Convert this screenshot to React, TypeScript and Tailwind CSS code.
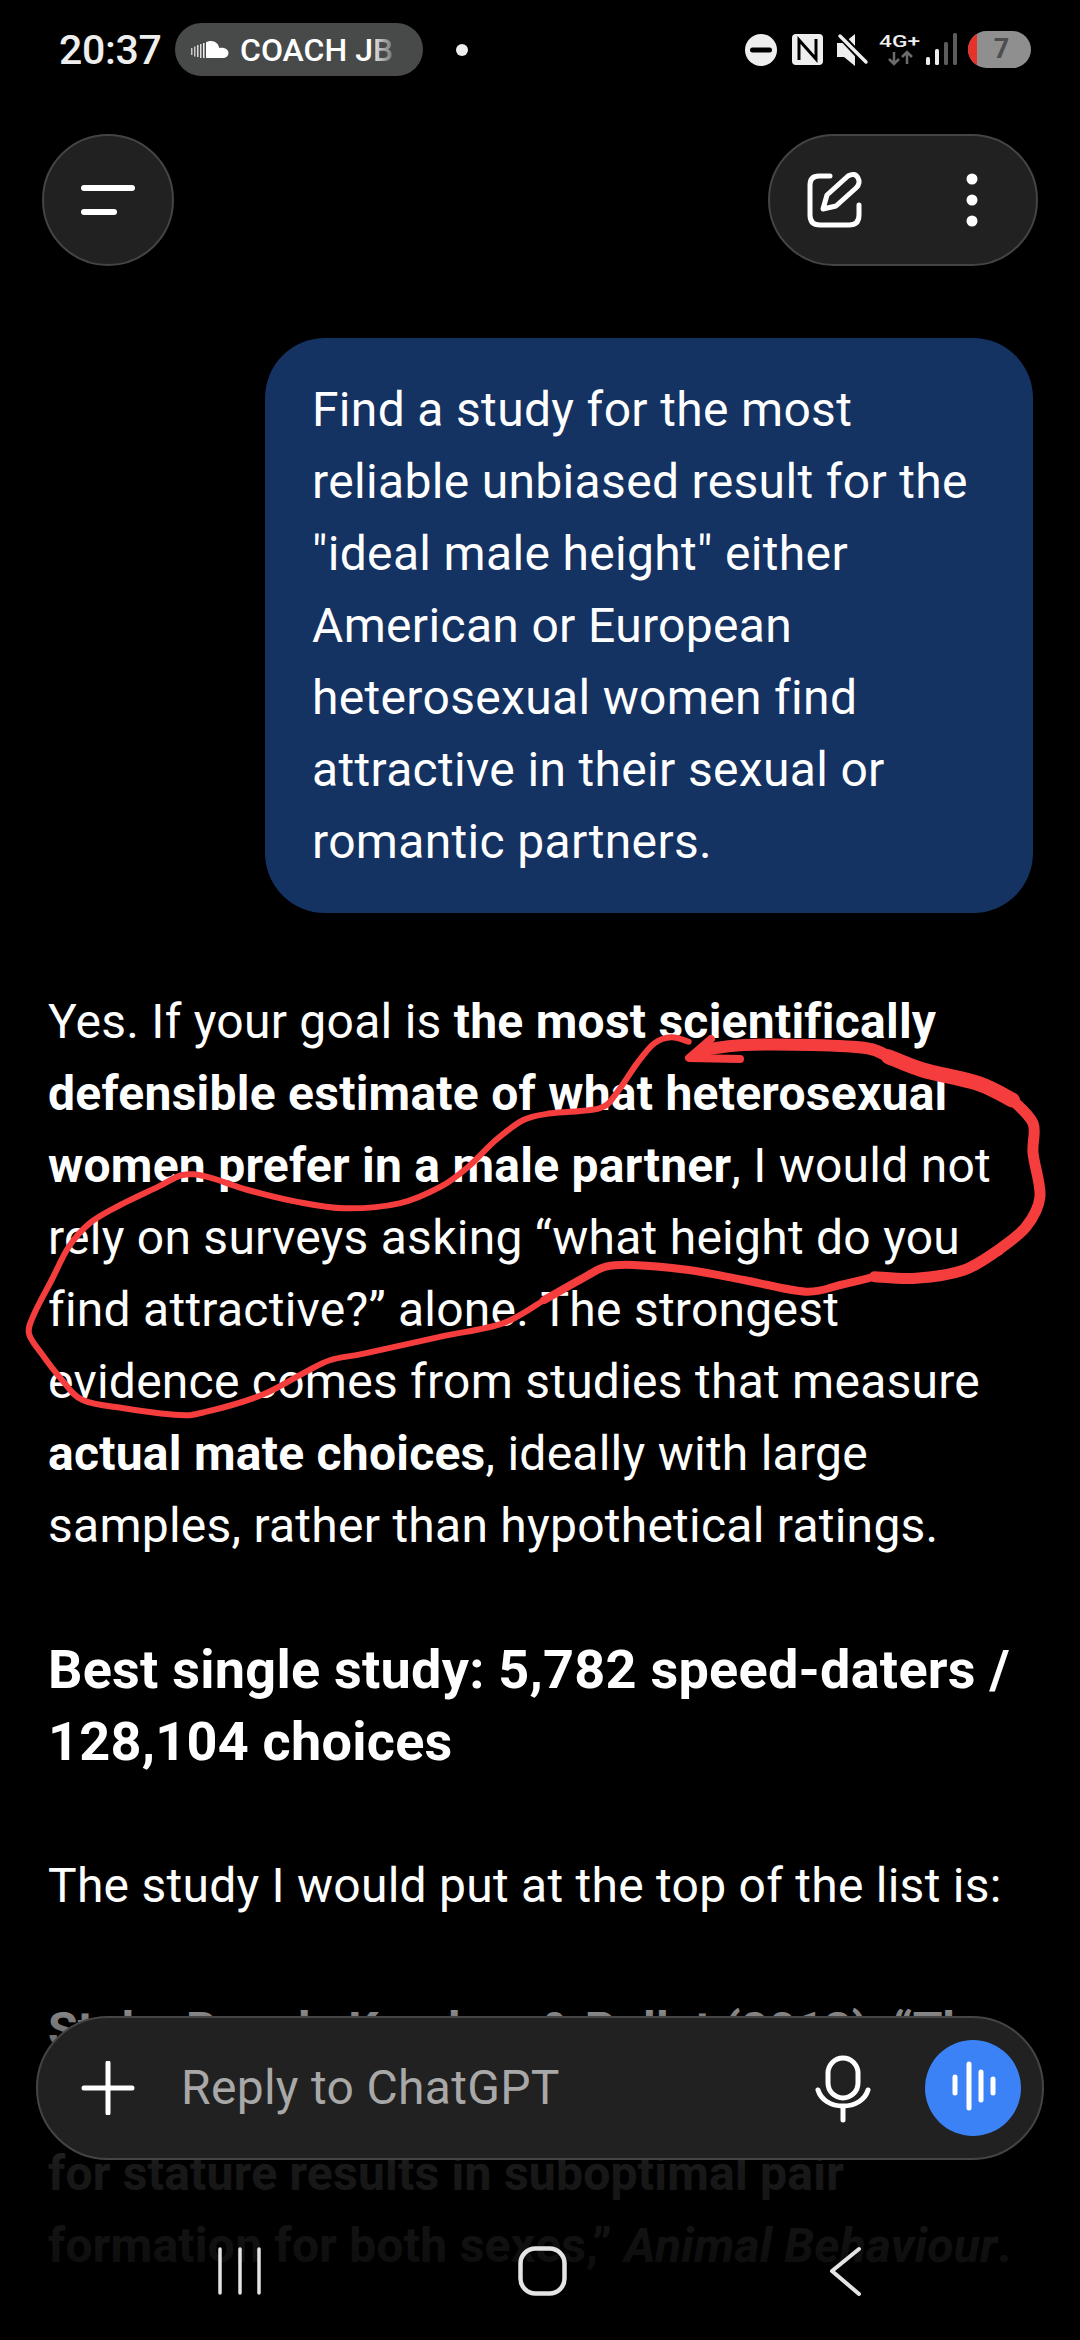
import React from "react";

const raw: [number, number][] = [
  [1000,185],[975,172],[950,190],[925,250],[895,340],[870,385],[800,400],[760,420],[720,480],[680,560],[640,620],[580,670],[500,685],[430,665],[360,630],[300,590],[265,585],[230,620],[170,680],[130,730],[100,800],[75,900],[50,1000],[42,1060],[60,1120],[90,1200],[120,1260],[180,1285],[260,1305],[300,1295],[380,1245],[440,1180],[480,1140],[530,1120],[640,1070],[730,1030],[790,960],[850,890],[880,860],[920,855],[1000,870],[1080,900],[1170,935],[1220,915],[1270,890],[1330,895],[1400,870],[1450,810],[1490,740],[1510,650],[1500,520],[1500,430],[1470,360],[1420,310],[1340,270],[1290,230],[1260,205],[1180,195],[1080,195],[1020,210],
];
const pts = raw.map(([x, y]) => [x / 1.452, y / 3 + 980] as [number, number]);

function smooth(p: [number, number][]) {
  let d = `M${p[0][0]} ${p[0][1]}`;
  for (let i = 0; i < p.length - 1; i++) {
    const a = p[Math.max(i - 1, 0)], b = p[i], c = p[i + 1], e = p[Math.min(i + 2, p.length - 1)];
    d += `C${b[0] + (c[0] - a[0]) / 6} ${b[1] + (c[1] - a[1]) / 6} ${c[0] - (e[0] - b[0]) / 6} ${c[1] - (e[1] - b[1]) / 6} ${c[0]} ${c[1]}`;
  }
  return d;
}

function Scribble() {
  const seg = (from: number, to: number) => smooth(pts.slice(from, to + 1));
  return (
    <svg className="absolute left-0 top-0" width="1080" height="2340" fill="none" stroke="#f63d3d" strokeLinecap="round" strokeLinejoin="round">
      <path d={seg(0, 36)} strokeWidth="6" />
      <path d={seg(36, 44)} strokeWidth="8" />
      <path d={seg(44, 47)} strokeWidth="11" />
      <path d={seg(47, 52)} strokeWidth="11" />
      <path d={seg(52, 55)} strokeWidth="15" />
      <path d={seg(55, 59)} strokeWidth="12" />
      <path d="M711 1039L689 1058L740 1059" strokeWidth="8" />
    </svg>
  );
}

function StatusBar() {
  return (
    <div className="relative h-[100px] pt-[23px] pl-[59px] flex items-start">
      <span className="h-[53px] w-[103px] leading-[55px] text-[41px] font-medium text-[#eeeeee] tracking-[-0.3px]">20:37</span>
      <div className="ml-[13px] w-[248px] h-[53px] rounded-full bg-[#484a49] flex items-center pl-[16px]">
        <svg width="38" height="18" viewBox="0 0 38 18" fill="#ffffff">
          <rect x="0" y="7" width="1.5" height="7" opacity=".7" />
          <rect x="3" y="5.5" width="1.5" height="10" opacity=".7" />
          <rect x="6" y="4" width="1.5" height="12" opacity=".8" />
          <rect x="9" y="3" width="1.5" height="14" opacity=".8" />
          <rect x="12" y="2" width="1.5" height="15" opacity=".9" />
          <path d="M15 17V1.5C16 .5 18 0 20 0C24.5 0 27.6 3 28.2 7C28.8 6.8 29.5 6.7 30.5 6.7C34.5 6.7 37.5 8.8 37.5 12C37.5 15 34.8 17 31.5 17Z" />
        </svg>
        <span className="ml-[11px] pt-[2px] text-[32px] font-medium leading-[51px] text-white whitespace-nowrap">
          COACH J<span className="bg-gradient-to-r from-[#e6e6e6] to-[#777777] bg-clip-text text-transparent">B</span>
        </span>
      </div>
      <div className="ml-[33px] mt-[21px] w-[12px] h-[12px] rounded-full bg-[#eeeeee]" />
      <svg className="absolute left-[740px] top-[25px]" width="300" height="50" viewBox="740 25 300 50">
        <circle cx="761" cy="50" r="16" fill="#eeeeee" />
        <rect x="750" y="47.5" width="22" height="5" rx="2.5" fill="#000" />
        <rect x="792" y="34" width="31" height="31" rx="4" fill="#eeeeee" />
        <path d="M799 60V40L816 59V39" fill="none" stroke="#000" strokeWidth="3" />
        <path d="M837 43H844L855 34V66L844 57H837Z" fill="#eeeeee" />
        <path d="M840 35L866 63" stroke="#000" strokeWidth="7" />
        <path d="M840 36L866 62" stroke="#eeeeee" strokeWidth="3.5" strokeLinecap="round" />
        <text x="879" y="47" fontFamily="Roboto, sans-serif" fontWeight="500" fontSize="17" textLength="41" lengthAdjust="spacingAndGlyphs" fill="#eeeeee">4G+</text>
        <path d="M894 52V64M889 59L894 64L899 59" fill="none" stroke="#6b6b6b" strokeWidth="2.5" />
        <path d="M907 64V52M902 57L907 52L912 57" fill="none" stroke="#6b6b6b" strokeWidth="2.5" />
        <rect x="926" y="57" width="4" height="8" rx="1.5" fill="#eeeeee" />
        <rect x="935" y="49" width="4" height="16" rx="1.5" fill="#eeeeee" />
        <rect x="944" y="42" width="4" height="23" rx="1.5" fill="#5c5c5c" />
        <rect x="953" y="33" width="4" height="32" rx="1.5" fill="#5c5c5c" />
      </svg>
      <div className="absolute left-[968px] top-[31px] w-[63px] h-[37px] rounded-full bg-[#8f8f8f] overflow-hidden flex items-center justify-center">
        <div className="absolute left-0 top-0 h-full w-[9px] bg-[#e5332a]" />
        <span className="ml-[4px] text-[27px] font-bold leading-none text-[#4d4d4d]">7</span>
      </div>
    </div>
  );
}

function Header() {
  return (
    <div className="h-[238px] pt-[34px] pl-[42px] pr-[42px] flex justify-between items-start">
      <div className="w-[132px] h-[132px] rounded-full bg-[#212121] border-2 border-[#444444] flex flex-col gap-[18px] pl-[37px] pt-[49px]">
        <div className="w-[54px] h-[6px] rounded-full bg-white" />
        <div className="w-[36px] h-[6px] rounded-full bg-white" />
      </div>
      <div className="w-[270px] h-[132px] rounded-full bg-[#212121] border-2 border-[#444444] relative">
        <svg className="absolute left-[-2px] top-[-2px]" width="270" height="132" viewBox="768 134 270 132" fill="none" stroke="#ffffff" strokeLinecap="round" strokeLinejoin="round">
          <path d="M830 176H819Q810 176 810 185V215Q810 225 820 225H849Q859 225 859 215V205" strokeWidth="5" />
          <path d="M823 209L827 195L848 176Q855 172 858 178Q861 183 856 188L836 206Z" strokeWidth="5" />
          <circle cx="972" cy="179" r="5.5" fill="#fff" stroke="none" />
          <circle cx="972" cy="200" r="5.5" fill="#fff" stroke="none" />
          <circle cx="972" cy="221" r="5.5" fill="#fff" stroke="none" />
        </svg>
      </div>
    </div>
  );
}

function InputBar() {
  return (
    <div className="absolute left-[36px] top-[2016px] w-[1008px] h-[144px] rounded-full bg-[#212121] border-2 border-[#444444] flex items-center">
      <svg className="ml-[43px] shrink-0" width="54" height="54" viewBox="0 0 54 54" stroke="#fff" strokeWidth="5" strokeLinecap="round">
        <path d="M27 2V52M3 27H51" />
      </svg>
      <span className="ml-[46px] text-[48px] leading-none text-[#a8a8a8] tracking-[0.3px]">Reply to ChatGPT</span>
      <svg className="absolute left-[775px] top-[36px]" width="60" height="70" viewBox="0 0 60 70" fill="none" stroke="#fff" strokeWidth="5" strokeLinecap="round">
        <rect x="15" y="4" width="30" height="40" rx="15" />
        <path d="M5 36C8 46 18 52 30 52C42 52 52 46 55 36M30 52V66" />
      </svg>
      <div className="absolute left-[887px] top-[22px] w-[96px] h-[96px] rounded-full bg-[#3b82f6]">
        <svg width="96" height="96" viewBox="0 0 96 96" stroke="#fff" strokeWidth="5" strokeLinecap="round">
          <path d="M30 37V53M44 24V68M56 32V60M68 39V53" />
        </svg>
      </div>
    </div>
  );
}

function NavBar() {
  return (
    <svg className="absolute left-0 top-[2240px]" width="1080" height="64" viewBox="0 2240 1080 64" fill="none" stroke="#e4e4e4" strokeLinecap="round" strokeLinejoin="round">
      <path d="M220 2249V2293M240 2249V2293M259 2249V2293" strokeWidth="3.5" />
      <rect x="520.5" y="2248.5" width="44" height="45" rx="15" strokeWidth="4.5" />
      <path d="M859 2249L832 2271L859 2294" strokeWidth="4" />
    </svg>
  );
}

export default function App() {
  return (
    <div className="relative w-[1080px] h-[2340px] overflow-hidden bg-black text-white font-['Roboto',sans-serif]">
      <StatusBar />
      <Header />
      <div className="ml-[265px] w-[768px] h-[575px] rounded-[60px] bg-[#143262] pl-[47px] pr-[40px] pt-[36px] text-[48px] leading-[72px] tracking-[0.33px]">
        Find a study for the most reliable unbiased result for the "ideal male height" either American or European heterosexual women find attractive in their sexual or romantic partners.
      </div>
      <div className="pl-[48px] pr-[48px] pt-[73px] text-[48px] leading-[72px] tracking-[0.25px]">
        <p>
          Yes. If your goal is <b className="font-bold">the most scientifically defensible estimate of what heterosexual women prefer in a male partner</b>, I would not rely on surveys asking “what height do you find attractive?” alone. The strongest evidence comes from studies that measure <b className="font-bold">actual mate choices</b>, ideally with large samples, rather than hypothetical ratings.
        </p>
        <h2 className="mt-[72px] text-[54px] font-bold">Best single study: 5,782 speed-daters / 128,104 choices</h2>
        <p className="mt-[72px]">The study I would put at the top of the list is:</p>
        <p className="mt-[72px] font-bold">
          Stulp, Buunk, Kurzban &amp; Pollet (2013), “The height of choosiness: mutual mate choice for stature results in suboptimal pair formation for both sexes,” <i>Animal Behaviour</i>.
        </p>
      </div>
      <div className="absolute left-0 top-[1950px] w-full h-[390px] bg-[linear-gradient(to_bottom,rgba(0,0,0,0)_0%,rgba(0,0,0,0.5)_17%,rgba(0,0,0,0.9)_55%,rgba(0,0,0,0.94)_78%,rgba(0,0,0,1)_100%)]" />
      <Scribble />
      <InputBar />
      <NavBar />
    </div>
  );
}
